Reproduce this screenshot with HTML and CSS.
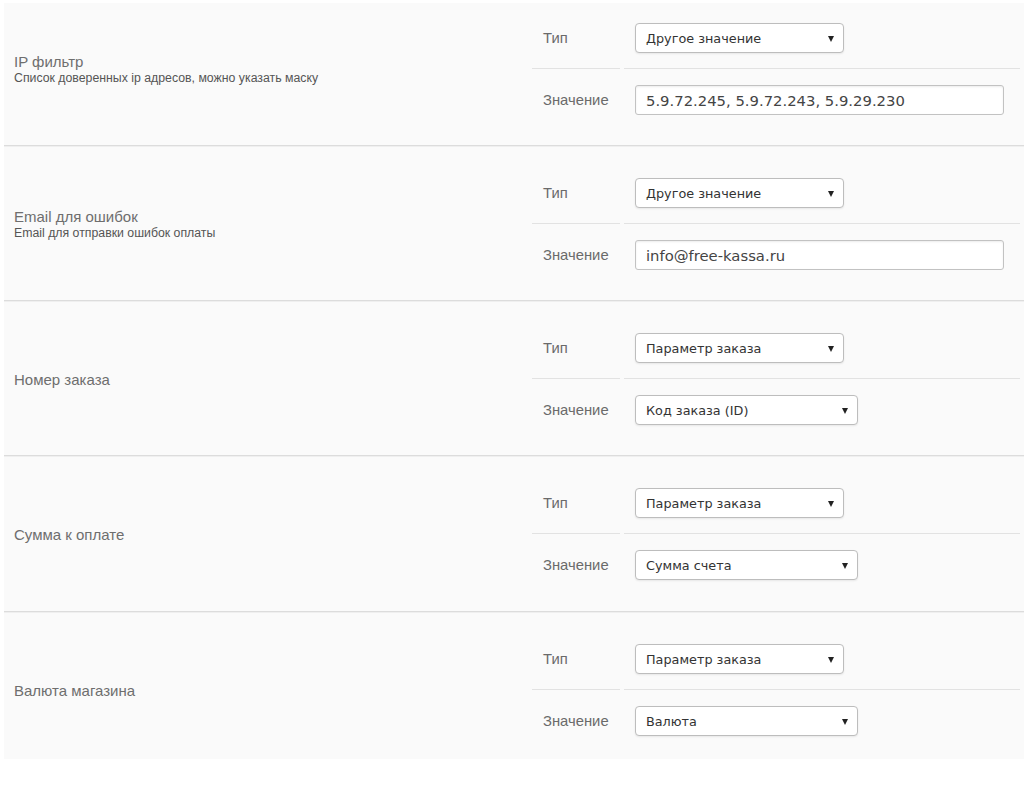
FILE: index.html
```html
<!DOCTYPE html>
<html lang="ru">
<head>
<meta charset="utf-8">
<title>Настройки оплаты</title>
<link rel="stylesheet" href="styles.css">
</head>
<body>
<div class="sheet">
  <div class="rows">
    <section class="row">
      <div class="info">
        <div class="title">IP фильтр</div>
        <div class="hint">Список доверенных ip адресов, можно указать маску</div>
      </div>
      <table class="fields">
        <tr>
          <td class="flabel">Тип</td>
          <td class="fval"><div class="select narrow"><span>Другое значение</span><i class="caret"></i></div></td>
        </tr>
        <tr>
          <td class="flabel">Значение</td>
          <td class="fval"><input class="text" type="text" value="5.9.72.245, 5.9.72.243, 5.9.29.230"></td>
        </tr>
      </table>
    </section>

    <section class="row">
      <div class="info">
        <div class="title">Email для ошибок</div>
        <div class="hint">Email для отправки ошибок оплаты</div>
      </div>
      <table class="fields">
        <tr>
          <td class="flabel">Тип</td>
          <td class="fval"><div class="select narrow"><span>Другое значение</span><i class="caret"></i></div></td>
        </tr>
        <tr>
          <td class="flabel">Значение</td>
          <td class="fval"><input class="text" type="text" value="info@free-kassa.ru"></td>
        </tr>
      </table>
    </section>

    <section class="row">
      <div class="info">
        <div class="title">Номер заказа</div>
      </div>
      <table class="fields">
        <tr>
          <td class="flabel">Тип</td>
          <td class="fval"><div class="select narrow"><span>Параметр заказа</span><i class="caret"></i></div></td>
        </tr>
        <tr>
          <td class="flabel">Значение</td>
          <td class="fval"><div class="select wide"><span>Код заказа (ID)</span><i class="caret"></i></div></td>
        </tr>
      </table>
    </section>

    <section class="row">
      <div class="info">
        <div class="title">Сумма к оплате</div>
      </div>
      <table class="fields">
        <tr>
          <td class="flabel">Тип</td>
          <td class="fval"><div class="select narrow"><span>Параметр заказа</span><i class="caret"></i></div></td>
        </tr>
        <tr>
          <td class="flabel">Значение</td>
          <td class="fval"><div class="select wide"><span>Сумма счета</span><i class="caret"></i></div></td>
        </tr>
      </table>
    </section>

    <section class="row">
      <div class="info">
        <div class="title">Валюта магазина</div>
      </div>
      <table class="fields">
        <tr>
          <td class="flabel">Тип</td>
          <td class="fval"><div class="select narrow"><span>Параметр заказа</span><i class="caret"></i></div></td>
        </tr>
        <tr>
          <td class="flabel">Значение</td>
          <td class="fval"><div class="select wide"><span>Валюта</span><i class="caret"></i></div></td>
        </tr>
      </table>
    </section>
  </div>
</div>
</body>
</html>
```

FILE: styles.css
```css
html, body {
  margin: 0;
  padding: 0;
  background: #ffffff;
}

body {
  font-family: "Liberation Sans", Arial, sans-serif;
  color: #666;
}

.sheet {
  margin: 3px 0 0 4px;
  height: 756px;
  overflow: hidden;
  background: #fafafa;
}

.rows {
  margin-top: -12px;
}

.row {
  display: grid;
  grid-template-columns: 524px auto;
  align-items: center;
  padding: 17px 0 15px;
  border-bottom: 1px solid #dcdcdc;
  box-shadow: 0 1px 0 #efefef;
}

.row:nth-child(4) {
  padding-bottom: 16px;
}

.info {
  padding-left: 10px;
}

.title {
  font-size: 15px;
  line-height: 17px;
  color: #6e6e6e;
}

.hint {
  margin-top: 1px;
  font-size: 12.3px;
  line-height: 14px;
  color: #555;
}

.fields {
  border-collapse: separate;
  border-spacing: 4px 0;
}

.fields td {
  vertical-align: middle;
}

.fields tr:first-child td {
  border-bottom: 1px solid #e2e2e2;
}

.flabel {
  width: 77px;
  padding: 15px 0 15px 11px;
  font-size: 14.8px;
  color: #6a6a6a;
  white-space: nowrap;
}

.fval {
  padding: 15px 12px 15px 11px;
}

.fields tr:last-child td {
  padding-top: 16px;
}

.select {
  position: relative;
  box-sizing: border-box;
  height: 30px;
  display: flex;
  align-items: center;
  padding: 0 10px;
  background: #fff;
  border: 1px solid #bdbdbd;
  border-radius: 4px;
  box-shadow: 0 1px 2px rgba(0, 0, 0, 0.08);
  font-family: "DejaVu Sans", Verdana, sans-serif;
  font-size: 12.8px;
  color: #333;
}

.select.narrow {
  width: 209px;
}

.select.wide {
  width: 223px;
}

.caret {
  position: absolute;
  right: 9px;
  top: 12px;
  width: 0;
  height: 0;
  border-left: 3.5px solid transparent;
  border-right: 3.5px solid transparent;
  border-top: 6px solid #222;
}

.text {
  display: block;
  box-sizing: border-box;
  width: 369px;
  height: 30px;
  margin: 0;
  padding: 0 10px;
  background: #fff;
  border: 1px solid #c2c2c2;
  border-radius: 3px;
  box-shadow: inset 0 1px 2px rgba(0, 0, 0, 0.08);
  font-family: "DejaVu Sans", Verdana, sans-serif;
  font-size: 14.8px;
  color: #444;
  outline: none;
}
```
